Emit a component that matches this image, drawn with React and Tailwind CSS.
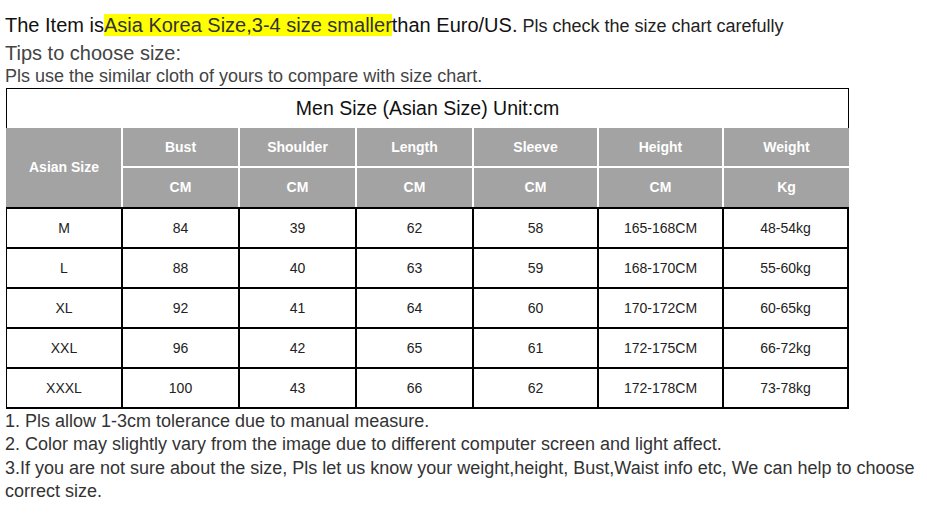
import React from 'react';

const cols = ['Bust', 'Shoulder', 'Length', 'Sleeve', 'Height', 'Weight'];
const units = ['CM', 'CM', 'CM', 'CM', 'CM', 'Kg'];
const rows = [
  ['M', '84', '39', '62', '58', '165-168CM', '48-54kg'],
  ['L', '88', '40', '63', '59', '168-170CM', '55-60kg'],
  ['XL', '92', '41', '64', '60', '170-172CM', '60-65kg'],
  ['XXL', '96', '42', '65', '61', '172-175CM', '66-72kg'],
  ['XXXL', '100', '43', '66', '62', '172-178CM', '73-78kg'],
];

const gridCols = 'grid grid-cols-[116px_117px_117px_117px_125px_125px_125px]';

export default function App() {
  return (
    <div className="w-[927px] h-[528px] bg-white pt-[12px] pl-[5px] font-['Liberation_Sans',Arial,sans-serif] overflow-hidden">
      {/* Intro */}
      <div className="h-[28px] text-[20px] leading-[26px] text-[#111] whitespace-nowrap">
        The Item is<span className="bg-[#ffff00] text-[#333]">Asia Korea Size,3-4 size smaller</span>than Euro/US.
        <span className="text-[18px] leading-[20px] text-[#222]"> Pls check the size chart carefully</span>
      </div>
      <div className="h-[25px] text-[20px] leading-[26px] text-[#444]">Tips to choose size:</div>
      <div className="h-[21px] text-[18px] leading-[22px] text-[#444] whitespace-nowrap">Pls use the similar cloth of yours to compare with size chart.</div>

      {/* Size chart */}
      <div className="w-[843px] ml-[1px] mt-[2px]">
        <div className="h-[40px] border border-b-0 border-black flex items-center justify-center text-[19.5px] text-[#111]">
          Men Size (Asian Size) Unit:cm
        </div>
        <div className={`${gridCols} grid-rows-[40px_39px] border-l border-[#a3a3a3] bg-[#a3a3a3] text-white font-bold text-[14px]`}>
          <div className="row-span-2 flex items-center justify-center border-r-2 border-white">Asian Size</div>
          {cols.map((c, i) => (
            <div key={c} className={`flex items-center justify-center border-b-2 border-white ${i < cols.length - 1 ? 'border-r-2' : ''}`}>
              {c}
            </div>
          ))}
          {units.map((u, i) => (
            <div key={i} className={`flex items-center justify-center border-white ${i < units.length - 1 ? 'border-r-2' : ''}`}>
              {u}
            </div>
          ))}
        </div>
        <div className={`${gridCols} border-l border-t-2 border-black text-[14px] text-[#222]`}>
          {rows.map((r) =>
            r.map((v, j) => (
              <div key={r[0] + j} className="h-[40px] flex items-center justify-center border-r-2 border-b-2 border-black">
                {v}
              </div>
            ))
          )}
        </div>
      </div>

      {/* Notes */}
      <div className="text-[18px] leading-[23.4px] text-[#333] mt-[1px] pr-[8px]">
        <div>1. Pls allow 1-3cm tolerance due to manual measure.</div>
        <div>2. Color may slightly vary from the image due to different computer screen and light affect.</div>
        <div>3.If you are not sure about the size, Pls let us know your weight,height, Bust,Waist info etc, We can help to choose correct size.</div>
      </div>
    </div>
  );
}
